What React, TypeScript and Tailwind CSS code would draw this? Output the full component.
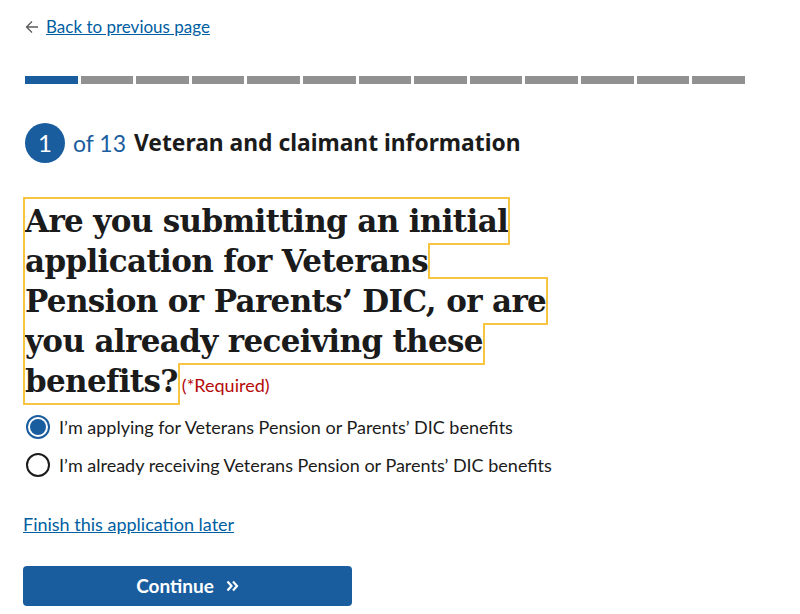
import React from "react";

const sans = { fontFamily: "Lato, 'Liberation Sans', sans-serif" };
const serif = { fontFamily: "'DejaVu Serif', 'Liberation Serif', serif" };
const noto = { fontFamily: "'Noto Sans', 'Open Sans', sans-serif" };

export default function App() {
  const segs = Array.from({ length: 13 }, (_, i) => i);
  return (
    <div className="w-[800px] h-[614px] bg-white overflow-hidden text-[#1b1b1b]" style={sans}>
      <div className="pl-[23px] pr-[55px] pt-[16px]">
        <div className="flex items-center gap-[7px] h-[22px]">
          <svg width="14" height="14" viewBox="0 0 14 14" className="ml-[2px]">
            <path d="M7 1.5 L1.5 7 L7 12.5 M1.5 7 H13" fill="none" stroke="#5c5c5c" strokeWidth="1.3" />
          </svg>
          <a href="#" className="text-[#005ea2] underline text-[17px] leading-[22px]">Back to previous page</a>
        </div>

        <div className="flex gap-[3px] mt-[38px] ml-[2px]">
          {segs.map((i) => (
            <div key={i} className={`flex-1 h-[8px] ${i === 0 ? "bg-[#1a5d9f]" : "bg-[#919191]"}`} />
          ))}
        </div>

        <div className="flex items-center mt-[39px] ml-[2px]">
          <div className="w-[40px] h-[40px] rounded-full bg-[#1a5d9f] text-white flex items-center justify-center text-[24px] leading-none">1</div>
          <span className="ml-[8px] text-[#1a5d9f] text-[23px] leading-none">of 13</span>
          <span className="ml-[8px] font-bold text-[22.8px] leading-none" style={noto}>Veteran and claimant information</span>
        </div>

        <div className="mt-[38px] ml-[2px] w-[580px]">
          <span className="outline-2 outline-[#f7c542] font-bold text-[31px] leading-[40px] tracking-[-0.65px] py-[4px]" style={serif}>
            Are you submitting an initial<br />application for Veterans<br />Pension or Parents’ DIC, or are<br />you already receiving these<br />benefits?
          </span>
          <span className="text-[#b50909] text-[18px] ml-[4px]">(*Required)</span>
        </div>

        <div className="mt-[14px] flex flex-col gap-[14px]">
          <label className="flex items-center gap-[9px] h-[24px]">
            <span className="w-[24px] h-[24px] rounded-full border-2 border-[#1a5d9f] flex items-center justify-center ml-[3px]">
              <span className="w-[16px] h-[16px] rounded-full bg-[#1a5d9f]" />
            </span>
            <span className="text-[18px]">I’m applying for Veterans Pension or Parents’ DIC benefits</span>
          </label>
          <label className="flex items-center gap-[9px] h-[24px]">
            <span className="w-[24px] h-[24px] rounded-full border-2 border-[#1b1b1b] ml-[3px]" />
            <span className="text-[18px]">I’m already receiving Veterans Pension or Parents’ DIC benefits</span>
          </label>
        </div>

        <div className="mt-[34px] leading-[26px]">
          <a href="#" className="text-[#005ea2] underline text-[18px]">Finish this application later</a>
        </div>

        <button className="mt-[28px] w-[329px] h-[40px] rounded-[4px] bg-[#1a5d9f] text-white font-bold text-[19px] flex items-center justify-center gap-[12px]">
          Continue
          <svg width="13" height="12" viewBox="0 0 13 12">
            <path d="M1.5 1.5 L5.5 6 L1.5 10.5 M7 1.5 L11 6 L7 10.5" fill="none" stroke="white" strokeWidth="2.2" />
          </svg>
        </button>
      </div>
    </div>
  );
}
